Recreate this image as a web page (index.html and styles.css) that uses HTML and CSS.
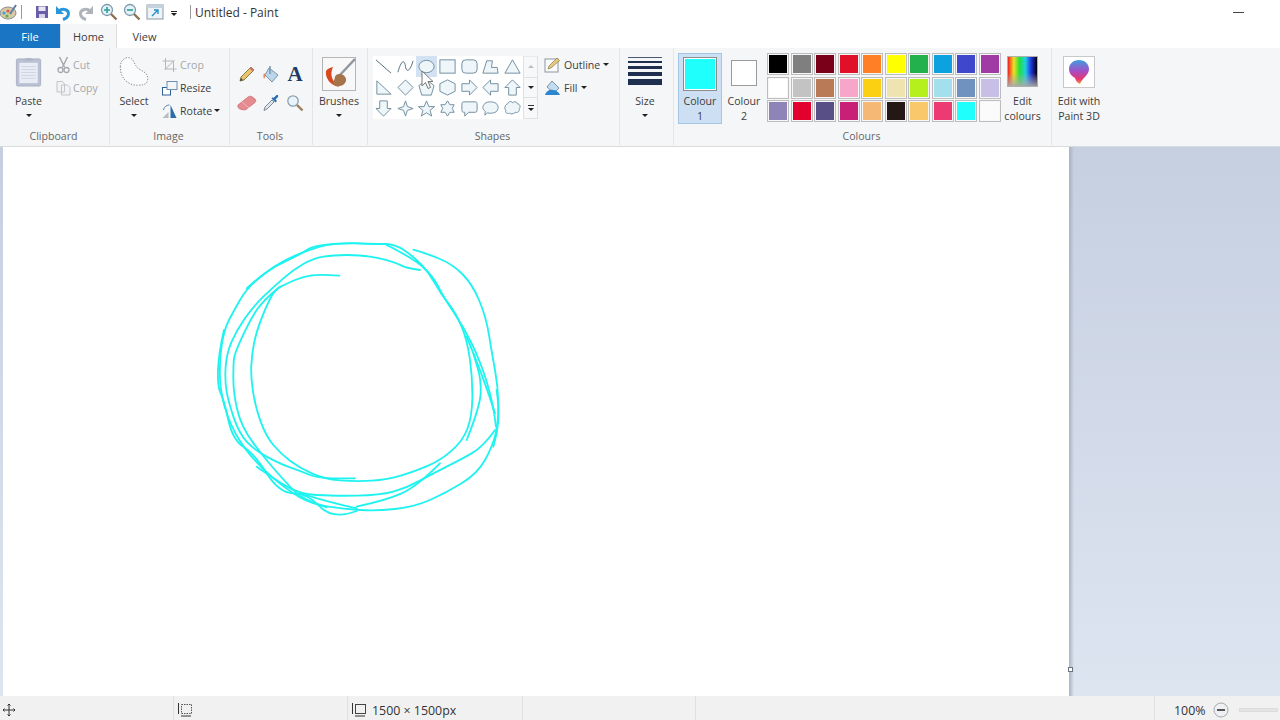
FILE: index.html
```html
<!DOCTYPE html>
<html lang="en">
<head>
  <meta charset="UTF-8">
  <title>Untitled - Paint</title>
  <link rel="stylesheet" href="styles.css">
</head>
<body>

  <!-- Title bar -->
  <header class="titlebar">
    <svg class="app-icon" width="18" height="18" viewBox="0 0 18 18"><ellipse cx="8" cy="10" rx="8" ry="6" fill="#d9c9a3" stroke="#8a8f96"/><circle cx="4" cy="10" r="1.6" fill="#3aa0d8"/><circle cx="8" cy="8" r="1.6" fill="#e0574f"/><circle cx="7" cy="13" r="1.6" fill="#5ab04a"/><path d="M10 11 L16 2" stroke="#5c7fa8" stroke-width="2"/></svg>
    <span class="bar-sep"></span>
    <div class="quick">
      <svg width="14" height="14" viewBox="0 0 14 14"><path d="M1 1 H13 V13 H1 Z" fill="#6a5da8"/><rect x="3.5" y="1.5" width="7" height="4.5" fill="#e9e6f4"/><rect x="4" y="9" width="6" height="4" fill="#d6d2e8"/></svg>
      <svg width="18" height="18" viewBox="0 0 18 18"><path d="M2 3 V11 H10 Z" fill="#2a97dc"/><path d="M5 8 C8 5 14.500 6 14.500 10.500 C14.500 13.500 12 15.500 9 16.500" fill="none" stroke="#2a97dc" stroke-width="3"/></svg>
      <svg width="18" height="18" viewBox="0 0 18 18"><path d="M16 3 V11 H8 Z" fill="#aeb4ba"/><path d="M13 8 C10 5 3.500 6 3.500 10.500 C3.500 13.500 6 15.500 9 16.500" fill="none" stroke="#aeb4ba" stroke-width="3"/></svg>
      <svg width="18" height="18" viewBox="0 0 18 18"><circle cx="7" cy="7" r="5.500" fill="#e3f1fa" stroke="#7f99ac" stroke-width="1.300"/><path d="M7 4 V10 M4 7 H10" stroke="#2f9f8f" stroke-width="1.600"/><path d="M11 11 L16.500 16.500" stroke="#8c7350" stroke-width="2.400"/></svg>
      <svg width="18" height="18" viewBox="0 0 18 18"><circle cx="7" cy="7" r="5.500" fill="#e3f1fa" stroke="#7f99ac" stroke-width="1.300"/><path d="M4 7 H10" stroke="#2f9f8f" stroke-width="1.600"/><path d="M11 11 L16.500 16.500" stroke="#8c7350" stroke-width="2.400"/></svg>
      <svg width="18" height="16" viewBox="0 0 18 16"><rect x="1" y="1" width="16" height="14" fill="#eef3f7" stroke="#8a9aa8"/><rect x="1" y="1" width="16" height="3" fill="#c6d3de"/><path d="M6 12 L12 6 M8 6 H12 V10" stroke="#2a8fc8" stroke-width="1.400" fill="none"/></svg>
    </div>
    <span class="qat-more"><i></i><b class="caret"></b></span>
    <span class="bar-sep bar-sep-title"></span>
    <h1 class="title">Untitled - Paint</h1>
    <span class="minimise"></span>
  </header>

  <!-- Tabs -->
  <nav class="tabs">
    <a class="tab tab-file">File</a>
    <a class="tab tab-home">Home</a>
    <a class="tab tab-view">View</a>
  </nav>

  <!-- Ribbon -->
  <section class="ribbon">

    <div class="group group-clipboard">
      <div class="group-body">
        <div class="big-btn btn-paste">
          <svg class="big-icon" width="28" height="32" viewBox="0 0 28 32"><rect x="1" y="3" width="25" height="28" rx="1.500" fill="#b9c1d2" stroke="#aab2c4"/><rect x="4" y="7" width="19" height="21" fill="#e8ecf4"/><path d="M6 11 H21 M6 14 H21 M6 17 H21 M6 20 H21 M6 23 H21" stroke="#ccd3e2"/><path d="M9 5 L11 2 H16 L18 5 Z" fill="#aeb7c8"/></svg>
          <span>Paste</span>
          <b class="caret"></b>
        </div>
        <div class="small-col small-col-clip">
          <div class="small-btn off">
            <svg width="16" height="18" viewBox="0 0 16 18"><path d="M4 1 L9 11 M12 1 L7 11" stroke="#a5a8ad" stroke-width="1.500"/><circle cx="5" cy="14" r="2.500" fill="none" stroke="#a5a8ad" stroke-width="1.300"/><circle cx="11" cy="14" r="2.500" fill="none" stroke="#a5a8ad" stroke-width="1.300"/></svg>
            <span>Cut</span>
          </div>
          <div class="small-btn off">
            <svg width="16" height="16" viewBox="0 0 16 16"><path d="M1.500 1.500 H7 L9 4 V12 H1.500 Z M6 5 H12 L14.500 7.500 V15 H6 Z" fill="#f2f3f5" stroke="#c2c5ca"/></svg>
            <span>Copy</span>
          </div>
        </div>
      </div>
      <div class="group-label">Clipboard</div>
    </div>

    <div class="group group-image">
      <div class="group-body">
        <div class="big-btn btn-select">
          <svg class="big-icon" width="34" height="34" viewBox="0 0 34 34"><path d="M2 12 C2 4 8 1 12 2 C17 3 17 10 22 14 C27 17 33 19 32 26 C31 32 26 32 20 32 C12 32 2 26 2 12 Z" fill="#fafbfc" stroke="#7d8288" stroke-dasharray="1.500 1.500"/></svg>
          <span>Select</span>
          <b class="caret"></b>
        </div>
        <div class="small-col">
          <div class="small-btn off">
            <svg width="16" height="16" viewBox="0 0 16 16"><path d="M4 1 V12 H15 M1 4 H12 V15 M3 13 L13 3" stroke="#b4b8bd" fill="none"/></svg>
            <span>Crop</span>
          </div>
          <div class="small-btn">
            <svg width="16" height="16" viewBox="0 0 16 16"><rect x="1" y="7.500" width="8" height="7.500" fill="#fff" stroke="#2c5f96"/><rect x="5.500" y="1.500" width="10" height="8" fill="#f2f6fa" stroke="#6d8fb0"/></svg>
            <span>Resize</span>
          </div>
          <div class="small-btn">
            <svg width="16" height="16" viewBox="0 0 16 16"><path d="M1 15 L7 9 V15 Z" fill="#b7bcc2"/><path d="M9 2 L15 15 H9 Z" fill="#2c6da8"/><path d="M2 7 C3 3 6 2 8 2" stroke="#5c7fa8" fill="none"/></svg>
            <span>Rotate</span>
            <b class="caret"></b>
          </div>
        </div>
      </div>
      <div class="group-label">Image</div>
    </div>

    <div class="group group-tools">
      <div class="tool-grid">
        <svg width="18" height="18" viewBox="0 0 18 18"><path d="M2 16 L3 12 L13 2 L16 5 L6 15 Z" fill="#e9c46a" stroke="#8a7a50"/><path d="M13 2 L16 5 L14.500 6.500 L11.500 3.500 Z" fill="#d9736a"/><path d="M2 16 L3 13 L5 15 Z" fill="#444"/></svg>
        <svg width="18" height="18" viewBox="0 0 18 18"><path d="M7 3 L16 10 L10 17 L3 10 Z" fill="#b9d6ec" stroke="#7a94aa"/><path d="M8 1 V9" stroke="#7a94aa" stroke-width="1.500"/><path d="M4 9 C1 7 1 11 2 14 C3 12 4 11 4 9 Z" fill="#e58a66"/></svg>
        <span class="tool-text">A</span>
        <svg width="20" height="16" viewBox="0 0 20 16"><path d="M1 10 L11 2 C12.500 1 14 1 15 1.800 L18 4 C19 5 19 6.500 18 7.500 L9 14.500 C8 15 7 15 6 14.800 L3 14 C1 13.500 0.500 11 1 10 Z" fill="#e58a8e" stroke="#c9666c" stroke-width=".7"/><path d="M5 7 L12 13" stroke="#f2b5b7"/></svg>
        <svg width="18" height="18" viewBox="0 0 18 18"><path d="M2 16.500 L3 13 L10 6 L12 8 L5 15 Z" fill="#dfe7ee" stroke="#7d8a96"/><path d="M9.500 4.500 L13.500 8.500 L15 7 L13.500 5.500 L16 3 C17 1 15 0.500 14 1.500 L11.500 4 L11 3 Z" fill="#2a6fb0"/></svg>
        <svg width="18" height="18" viewBox="0 0 18 18"><circle cx="7" cy="7" r="5.200" fill="#eaf3fa" stroke="#8aa0b2" stroke-width="1.300"/><path d="M11 11 L16.500 16.500" stroke="#9a7f5a" stroke-width="2.400"/></svg>
      </div>
      <div class="group-label">Tools</div>
    </div>

    <div class="group group-brushes">
      <div class="big-btn">
        <svg class="big-icon" width="34" height="34" viewBox="0 0 34 34"><rect x=".5" y=".5" width="33" height="33" fill="#f8f8f8" stroke="#b5b5b5"/><path d="M33 2 L17 19" stroke="#8f98a0" stroke-width="2.500"/><path d="M4 14 C3 21 8 28 17 30 C11 24 7 19 11 10 C7 11 5 12 4 14 Z" fill="#d9491f"/><path d="M14 18 C19 15 25 19 24 24 C22 30 14 31 10 26 C13 25 12 20 14 18 Z" fill="#a5744a"/></svg>
        <span>Brushes</span>
        <b class="caret"></b>
      </div>
    </div>

    <div class="group group-shapes">
      <div class="group-body">
        <div class="gallery">
          <div class="shape-grid">
            <span><svg viewBox="0 0 20 20"><path class="nofill" d="M2 3 L18 17"/></svg></span>
            <span><svg viewBox="0 0 20 20"><path class="nofill" d="M2 16 C6 2 9 3 10 10 S15 15 18 4"/></svg></span>
            <span class="is-hover"><svg viewBox="0 0 20 20"><ellipse cx="10" cy="10" rx="8" ry="6.500"/></svg></span>
            <span><svg viewBox="0 0 20 20"><rect x="2" y="3" width="16" height="14"/></svg></span>
            <span><svg viewBox="0 0 20 20"><rect x="2" y="3" width="16" height="14" rx="4"/></svg></span>
            <span><svg viewBox="0 0 20 20"><path d="M2 17 L6 4 H12 L11 11 H17 L18 17 Z"/></svg></span>
            <span><svg viewBox="0 0 20 20"><path d="M10 3 L18 17 H2 Z"/></svg></span>
            <span><svg viewBox="0 0 20 20"><path d="M3 3 L18 17 H3 Z"/></svg></span>
            <span><svg viewBox="0 0 20 20"><path d="M10 2 L18 10 L10 18 L2 10 Z"/></svg></span>
            <span><svg viewBox="0 0 20 20"><path d="M10 2 L18 8 L15 18 H5 L2 8 Z"/></svg></span>
            <span><svg viewBox="0 0 20 20"><path d="M10 2 L18 6 V14 L10 18 L2 14 V6 Z"/></svg></span>
            <span><svg viewBox="0 0 20 20"><path d="M2 6 H10 V2 L18 10 L10 18 V14 H2 Z"/></svg></span>
            <span><svg viewBox="0 0 20 20"><path d="M18 6 H10 V2 L2 10 L10 18 V14 H18 Z"/></svg></span>
            <span><svg viewBox="0 0 20 20"><path d="M6 18 V10 H2 L10 2 L18 10 H14 V18 Z"/></svg></span>
            <span><svg viewBox="0 0 20 20"><path d="M6 2 V10 H2 L10 18 L18 10 H14 V2 Z"/></svg></span>
            <span><svg viewBox="0 0 20 20"><path d="M10 2 L12 8 L18 10 L12 12 L10 18 L8 12 L2 10 L8 8 Z"/></svg></span>
            <span><svg viewBox="0 0 20 20"><path d="M10 2 L12.500 8 H18.500 L13.700 12 L15.500 18 L10 14.500 L4.500 18 L6.300 12 L1.500 8 H7.500 Z"/></svg></span>
            <span><svg viewBox="0 0 20 20"><path d="M10 2 L12.500 6 H17 L15 10 L17 14 H12.500 L10 18 L7.500 14 H3 L5 10 L3 6 H7.500 Z"/></svg></span>
            <span><svg viewBox="0 0 20 20"><path d="M4 3 H16 Q18 3 18 5 V12 Q18 14 16 14 H9 L5 18 V14 H4 Q2 14 2 12 V5 Q2 3 4 3 Z"/></svg></span>
            <span><svg viewBox="0 0 20 20"><path d="M10 3 C15 3 18 5.500 18 9 C18 12.500 15 15 10 15 C9 15 8 15 7 14.500 L4 17 L4.500 13 C3 12 2 10.500 2 9 C2 5.500 5 3 10 3 Z"/></svg></span>
            <span><svg viewBox="0 0 20 20"><path d="M5 5 C6 2 9 2 10 4 C12 2 15 3 15 5 C18 5 19 9 17 10 C18 13 15 15 13 14 C11 16 8 16 7 15 C4 16 2 14 3 12 C1 10 2 6 5 5 Z"/></svg></span>
          </div>
          <div class="gallery-scroll">
            <span class="scroll-up"><b class="caret caret-up"></b></span>
            <span><b class="caret"></b></span>
            <span class="scroll-more"><i></i><b class="caret"></b></span>
          </div>
        </div>
        <div class="small-col small-col-shape">
          <div class="small-btn">
            <svg width="17" height="17" viewBox="0 0 17 17"><rect x="1" y="3" width="13" height="13" fill="#fafbfc" stroke="#8b96a0"/><path d="M4 13 L5 10 L13 2 L15.500 4.500 L7 12 Z" fill="#e6c878" stroke="#8a7a50" stroke-width=".7"/></svg>
            <span>Outline</span>
            <b class="caret"></b>
          </div>
          <div class="small-btn">
            <svg width="17" height="17" viewBox="0 0 17 17"><path d="M8 2 L15 9 L10 14 L3 8 Z" fill="#c4dcef" stroke="#7a94aa"/><path d="M1 16 C2 12 6 10 9 11 C12 11 15 13 16 16 Z" fill="#2c86cf"/></svg>
            <span>Fill</span>
            <b class="caret"></b>
          </div>
        </div>
      </div>
      <div class="group-label">Shapes</div>
    </div>

    <div class="group group-size">
      <div class="big-btn">
        <div class="size-icon"><i></i><i></i><i></i><i></i><i></i></div>
        <span>Size</span>
        <b class="caret"></b>
      </div>
    </div>

    <div class="group group-colours">
      <div class="group-body">
        <div class="colour-btn is-active">
          <div class="swatch swatch-one"></div>
          <span>Colour<br>1</span>
        </div>
        <div class="colour-btn">
          <div class="swatch swatch-two"></div>
          <span>Colour<br>2</span>
        </div>
        <div class="palette">
          <i class="c1"></i><i class="c2"></i><i class="c3"></i><i class="c4"></i><i class="c5"></i><i class="c6"></i><i class="c7"></i><i class="c8"></i><i class="c9"></i><i class="c10"></i>
          <i class="c11"></i><i class="c12"></i><i class="c13"></i><i class="c14"></i><i class="c15"></i><i class="c16"></i><i class="c17"></i><i class="c18"></i><i class="c19"></i><i class="c20"></i>
          <i class="c21"></i><i class="c22"></i><i class="c23"></i><i class="c24"></i><i class="c25"></i><i class="c26"></i><i class="c27"></i><i class="c28"></i><i class="c29"></i><i class="c30"></i>
        </div>
        <div class="big-btn btn-edit">
          <div class="rainbow"></div>
          <span>Edit<br>colours</span>
        </div>
      </div>
      <div class="group-label">Colours</div>
    </div>

    <div class="group group-3d">
      <div class="big-btn">
        <div class="icon-3d">
          <svg width="22" height="26" viewBox="0 0 22 26"><defs><linearGradient id="drop" x1="0" y1="0" x2="0" y2="1"><stop offset="0" stop-color="#3f9fe0"/><stop offset=".45" stop-color="#a14fc8"/><stop offset=".8" stop-color="#e8366f"/><stop offset="1" stop-color="#f2a23a"/></linearGradient></defs><path d="M11 1 C17 1 21 5 21 10 C21 16 15 18 12 25 C9 24 8 22 7 19 C3 17 1 14 1 10 C1 5 5 1 11 1 Z" fill="url(#drop)"/></svg>
        </div>
        <span>Edit with<br>Paint 3D</span>
      </div>
    </div>

    <!-- mouse pointer over the oval shape -->
    <svg class="pointer" width="14" height="20" viewBox="0 0 14 20"><path d="M1 1 V16 L4.500 12.500 L7 18.500 L9.500 17.500 L7 11.500 H12 Z" fill="#fff" stroke="#777"/></svg>
  </section>

  <!-- Drawing area -->
  <main class="workspace">
    <div class="canvas">
      <svg class="scribble" width="320" height="295" viewBox="0 0 960 885">
        <path d="M418,137 Q360,133 335,136 T285,150 242,170 210,207 182,272 162,340 154,405 159,485 182,575 220,645 270,692 335,730 420,751 515,752 605,736 685,707 755,662 802,597 817,505 810,390 785,290 745,220 705,160 665,105 615,62 555,42 460,40 360,50 285,77 220,112 165,155 120,210 87,270 65,345 60,445 82,555 135,655 215,740 300,802 385,830 480,840 585,837 690,810 785,760 855,690 887,610 895,520 885,420 867,315 837,210 787,132 720,87 640,59"/>
        <path d="M660,120 Q620,115 605,107 T565,92 510,80 440,75 370,80 310,102 250,145 190,200 135,265 95,335 77,410 80,485 102,565 140,635 200,680 270,712 330,735 465,745"/>
        <path d="M885,600 Q850,650 815,670 T740,710 660,752 580,785 470,797 350,795 265,772 170,710"/>
        <path d="M885,550 Q850,440 800,320"/>
        <path d="M800,630 Q840,530 842,490 T832,410 820,370"/>
        <path d="M240,170 Q190,210 170,240 T127,320 102,385 100,445 112,540 157,635 225,720 285,785 380,832"/>
        <path d="M720,700 Q650,770 605,790 T470,830"/>
        <path d="M72,300 Q56,370 54,420 T62,490 85,570 130,650 200,730 280,790 360,830 470,843"/>
        <path d="M140,175 Q200,120 250,97 T320,60 400,42 480,40 560,42"/>
        <path d="M560,45 Q640,85 670,112 T715,170 760,245 815,340 860,455 888,590"/>
        <path d="M300,790 Q400,820 470,835"/>
        <path d="M890,480 Q897,530 895,570 T880,650"/>
      </svg>
    </div>
    <div class="canvas-shadow"></div>
    <span class="canvas-handle"></span>
  </main>

  <!-- Status bar -->
  <footer class="statusbar">
    <div class="cell cell-pos">
      <svg width="14" height="14" viewBox="0 0 14 14"><path d="M7 1 V13 M1 7 H13 M5.500 2.500 L7 1 L8.500 2.500 M5.500 11.500 L7 13 L8.500 11.500 M2.500 5.500 L1 7 L2.500 8.500 M11.500 5.500 L13 7 L11.500 8.500" stroke="#333" fill="none"/></svg>
    </div>
    <div class="cell cell-sel">
      <svg width="16" height="16" viewBox="0 0 16 16"><rect x="4.500" y="2.500" width="10" height="9" fill="none" stroke="#555" stroke-dasharray="1.500 1"/><path d="M1.500 1 V12 M4 14 H14" stroke="#333"/></svg>
    </div>
    <div class="cell cell-size">
      <svg width="16" height="16" viewBox="0 0 16 16"><rect x="4.500" y="2.500" width="10" height="9" fill="none" stroke="#444"/><path d="M1.500 1 V12 M4 14 H14" stroke="#333"/></svg>
      <span>1500 × 1500px</span>
    </div>
    <div class="cell cell-blank"></div>
    <div class="cell cell-fill"></div>
    <div class="cell cell-zoom">
      <span>100%</span>
      <svg width="16" height="16" viewBox="0 0 16 16"><circle cx="8" cy="8" r="7" fill="#eef0f3" stroke="#a6a9ad"/><rect x="4" y="7" width="8" height="2" fill="#555"/></svg>
      <div class="zoom-track"></div>
    </div>
  </footer>

</body>
</html>
```

FILE: styles.css
```css
body {
  font-family: 'Open Sans', 'Noto Sans', sans-serif;
  font-size: 10.6px;
  color: #3d3d3d;
  background-color: #fff;
  margin: 0;
  padding: 0;
  width: 1280px;
  height: 720px;
  overflow: hidden;
  display: flex;
  flex-direction: column;
}

svg {
  display: block;
  flex: none;
}

/* small black triangle used on every dropdown */
.caret {
  display: block;
  flex: none;
  width: 0;
  height: 0;
  border-left: 3px solid transparent;
  border-right: 3px solid transparent;
  border-top: 3px solid #222;
}

.caret-up {
  border-top: 0;
  border-bottom: 3px solid #bdbdbd;
}


/* title bar */
.titlebar {
  height: 24px;
  flex: none;
  display: flex;
  align-items: center;
  position: relative;
}

.bar-sep {
  width: 1px;
  height: 14px;
  background-color: #9a9a9a;
  margin-left: 3px;
}

.quick {
  display: flex;
  align-items: center;
  gap: 5px;
  margin-left: 13px;
}

.qat-more {
  margin-left: 7px;
  display: flex;
  flex-direction: column;
  align-items: center;
  gap: 1px;
  padding-top: 3px;
}

.qat-more i {
  width: 6px;
  height: 1px;
  background-color: #222;
}

.bar-sep-title {
  margin-left: 13px;
}

.title {
  margin: 0 0 0 4px;
  font-size: 12px;
  font-weight: 400;
  color: #333;
}

.minimise {
  width: 11px;
  height: 1px;
  background-color: #444;
  margin-left: auto;
  margin-right: 36px;
}


/* tabs */
.tabs {
  height: 24px;
  flex: none;
  display: flex;
  align-items: stretch;
}

.tab {
  display: flex;
  align-items: center;
  justify-content: center;
  font-size: 11px;
  color: #3d3d3d;
}

.tab-file {
  width: 60px;
  background-color: #1a76c4;
  color: #fff;
}

.tab-home {
  width: 57px;
  background-color: #f5f6f7;
  border-left: 1px solid #dcdddf;
  border-right: 1px solid #dcdddf;
  box-sizing: border-box;
}

.tab-view {
  width: 55px;
}


/* ribbon */
.ribbon {
  height: 99px;
  flex: none;
  display: flex;
  background-color: #f5f6f7;
  border-bottom: 1px solid #dadbdc;
  box-sizing: border-box;
  position: relative;
}

.group {
  display: flex;
  flex-direction: column;
  box-sizing: border-box;
  height: 97px;
  border-right: 1px solid #e4e5e7;
  padding-top: 5px;
  position: relative;
}

.group-body {
  display: flex;
  flex: 1;
}

.group-label {
  height: 17px;
  line-height: 17px;
  box-sizing: border-box;
  padding-right: 2px;
  text-align: center;
  color: #666;
  flex: none;
}

.group-clipboard { width: 110px; }
.group-image { width: 120px; }
.group-tools { width: 83px; }
.group-brushes { width: 55px; }
.group-shapes { width: 252px; }
.group-size { width: 54px; }
.group-colours { width: 378px; }
.group-3d { width: 54px; border-right: 0; }

.big-btn {
  display: flex;
  flex-direction: column;
  align-items: center;
  flex: none;
  text-align: center;
  line-height: 15px;
}

.big-btn .caret {
  margin-top: 5px;
}

.big-icon {
  height: 34px;
  margin-bottom: 3px;
}

.btn-paste {
  width: 57px;
}

.btn-select {
  width: 48px;
}

.btn-paste .big-icon,
.btn-select .big-icon {
  margin-top: 3px;
  margin-bottom: 7px;
  height: 31px;
}

.group-image .small-col {
  margin-left: 3px;
}

.small-col {
  display: flex;
  flex-direction: column;
  flex: none;
}

.small-btn {
  display: flex;
  align-items: center;
  height: 23px;
  gap: 2px;
}

.small-btn svg {
  width: 17px;
}

.small-btn .caret {
  margin-left: 0;
}

.small-col-clip {
  margin-left: -2px;
}

.small-col-clip .small-btn {
  gap: 1px;
}

.off {
  color: #a4a7ab;
}

.group-tools {
  padding-top: 0;
}

.tool-grid {
  display: grid;
  grid-template-columns: repeat(3, 24px);
  grid-template-rows: repeat(2, 29px);
  justify-items: center;
  align-items: center;
  margin: 11px 0 0 5px;
  flex: 1;
  align-content: start;
}

.tool-text {
  font-family: 'Liberation Serif', serif;
  font-weight: 700;
  font-size: 21px;
  line-height: 24px;
  color: #1f3a68;
}

.group-tools .group-label {
  width: 82px;
}

.group-brushes .big-btn,
.group-size .big-btn,
.group-3d .big-btn {
  width: 100%;
}

.group-brushes .big-btn {
  padding-right: 2px;
  box-sizing: border-box;
}

.group-brushes .big-icon {
  margin-top: 4px;
}


/* shapes gallery */
.group-shapes {
  padding-top: 8px;
}

.gallery {
  display: flex;
  margin-left: 5px;
  width: 165px;
  height: 63px;
  flex: none;
}

.shape-grid {
  display: grid;
  grid-template-columns: repeat(7, 21.4px);
  grid-template-rows: repeat(3, 21px);
  background-color: #fff;
  width: 150px;
}

.shape-grid span {
  display: flex;
  align-items: center;
  justify-content: center;
}

.shape-grid svg {
  width: 19px;
  height: 19px;
  fill: #eef6fa;
  stroke: #6f8c9e;
  stroke-width: 1;
}

.shape-grid .nofill {
  fill: none;
  stroke: #4f6a7c;
}

.shape-grid .is-hover {
  background-color: #d3e2f2;
}

.gallery-scroll {
  width: 15px;
  display: flex;
  flex-direction: column;
}

.gallery-scroll span {
  flex: 1;
  display: flex;
  flex-direction: column;
  gap: 2px;
  align-items: center;
  justify-content: center;
  border: 1px solid #dfe1e4;
  border-top: 0;
  background-color: #f7f8f9;
}

.gallery-scroll .scroll-up {
  border-top: 1px solid #e8e9eb;
}

.scroll-more i {
  width: 6px;
  height: 1px;
  background-color: #333;
}

.small-col-shape {
  margin-left: 6px;
  margin-top: -3px;
}

.small-col-shape .small-btn {
  gap: 3px;
}

.small-col-shape svg {
  width: 17px;
}

.group-size {
  padding-top: 4px;
}

.group-size .big-btn {
  padding-right: 3px;
  box-sizing: border-box;
}

.size-icon {
  width: 34px;
  height: 29px;
  margin-top: 5px;
  margin-bottom: 8px;
  display: flex;
  flex-direction: column;
  gap: 3px;
}

.size-icon i {
  display: block;
  background-color: #1f2f4f;
}

.size-icon i:nth-child(1) { height: 1px; background-color: #4b5872; }
.size-icon i:nth-child(2) { height: 2px; }
.size-icon i:nth-child(3) { height: 3px; }
.size-icon i:nth-child(4) { height: 4px; }
.size-icon i:nth-child(5) { height: 6px; }


/* colours */
.group-colours .group-body {
  padding-left: 4px;
}

.colour-btn {
  width: 44px;
  height: 71px;
  box-sizing: border-box;
  border: 1px solid transparent;
  display: flex;
  flex-direction: column;
  align-items: center;
  text-align: center;
  line-height: 15px;
  flex: none;
}

.colour-btn.is-active {
  background-color: #cde0f3;
  border-color: #a6c6e6;
}

.swatch {
  box-sizing: border-box;
  flex: none;
}

.swatch-one {
  width: 34px;
  height: 34px;
  margin: 3px 0 3px;
  background-color: #1ffffb;
  border: 1px solid #8c8c8c;
  outline: 1px solid #fff;
  outline-offset: -2px;
}

.swatch-two {
  width: 26px;
  height: 26px;
  margin: 6px 0 8px;
  background-color: #fff;
  border: 1px solid #9b9b9b;
}

.palette {
  display: grid;
  grid-template-columns: repeat(10, 22px);
  grid-template-rows: repeat(3, 22px);
  gap: 1.5px;
  margin-left: 1px;
  flex: none;
}

.palette i {
  display: block;
  box-sizing: border-box;
  border: 1px solid #bdbdbd;
  box-shadow: inset 0 0 0 1px #f7f7f7;
}

.c1 { background-color: #000; }
.c2 { background-color: #7f7f7f; }
.c3 { background-color: #7a0019; }
.c4 { background-color: #e0102a; }
.c5 { background-color: #ff7f27; }
.c6 { background-color: #ffff00; }
.c7 { background-color: #22b14c; }
.c8 { background-color: #0ca2e0; }
.c9 { background-color: #3f48cc; }
.c10 { background-color: #a03aa4; }
.c11 { background-color: #fff; }
.c12 { background-color: #c3c3c3; }
.c13 { background-color: #b97a57; }
.c14 { background-color: #f7a6c9; }
.c15 { background-color: #fbd012; }
.c16 { background-color: #efe4b0; }
.c17 { background-color: #b5f01d; }
.c18 { background-color: #a3dfec; }
.c19 { background-color: #7092be; }
.c20 { background-color: #c8bfe7; }
.c21 { background-color: #8f84b8; }
.c22 { background-color: #e4002e; }
.c23 { background-color: #574f85; }
.c24 { background-color: #c92077; }
.c25 { background-color: #f5b975; }
.c26 { background-color: #231815; }
.c27 { background-color: #f9c86a; }
.c28 { background-color: #ee3a73; }
.c29 { background-color: #1ffffb; }
.c30 { background-color: #fbfbfb; }

.btn-edit {
  width: 44px;
  margin-left: 0;
}

.rainbow {
  width: 31px;
  height: 31px;
  margin: 3px 0 7px;
  box-sizing: border-box;
  border: 1px solid #b0b0b0;
  background-image: linear-gradient(to bottom, rgba(255, 255, 255, 0) 55%, rgba(170, 170, 170, 0.9) 100%), linear-gradient(to right, #f02020, #f0e020, #20e040, #20d0e0, #2030e0, #000);
}

.icon-3d {
  width: 32px;
  height: 32px;
  margin: 3px 0 6px;
  box-sizing: border-box;
  border: 1px solid #c9c9c9;
  background-color: #fff;
  display: flex;
  align-items: center;
  justify-content: center;
}

.pointer {
  position: absolute;
  left: 421px;
  top: 22px;
}


/* drawing area */
.workspace {
  flex: 1;
  display: flex;
  position: relative;
  padding-left: 3px;
  background-image: linear-gradient(to bottom, #c6cfe0, #dde5f1);
  min-height: 0;
}

.canvas {
  width: 1066px;
  background-color: #fff;
  position: relative;
  flex: none;
}

.canvas-shadow {
  width: 5px;
  background-image: linear-gradient(to right, #a9b2c4, rgba(169, 178, 196, 0));
}

.scribble {
  position: absolute;
  left: 197px;
  top: 83px;
  fill: none;
  stroke: #1ff3f0;
  stroke-width: 5.5;
  stroke-linejoin: round;
  stroke-linecap: round;
}

.canvas-handle {
  position: absolute;
  left: 1068px;
  top: 520px;
  width: 3px;
  height: 3px;
  background-color: #fff;
  border: 1px solid #6c7480;
}


/* status bar */
.statusbar {
  height: 24px;
  flex: none;
  display: flex;
  background-color: #f1f1f1;
  font-size: 12.4px;
  color: #333;
}

.cell {
  display: flex;
  align-items: center;
  gap: 5px;
  box-sizing: border-box;
  border-right: 1px solid #e0e0e0;
  flex: none;
  padding-top: 4px;
}

.cell-pos { width: 174px; padding-left: 2px; }
.cell-sel { width: 174px; padding-left: 3px; }
.cell-size { width: 175px; padding-left: 3px; }
.cell-blank { width: 173px; }
.cell-fill { width: 459px; }

.cell-zoom {
  width: 125px;
  border-right: 0;
  padding-left: 19px;
  gap: 7px;
}

.zoom-track {
  width: 39px;
  height: 4px;
  margin-left: 3px;
  background-color: #e4e4e4;
  border: 1px solid #dcdcdc;
  box-sizing: border-box;
}
```
